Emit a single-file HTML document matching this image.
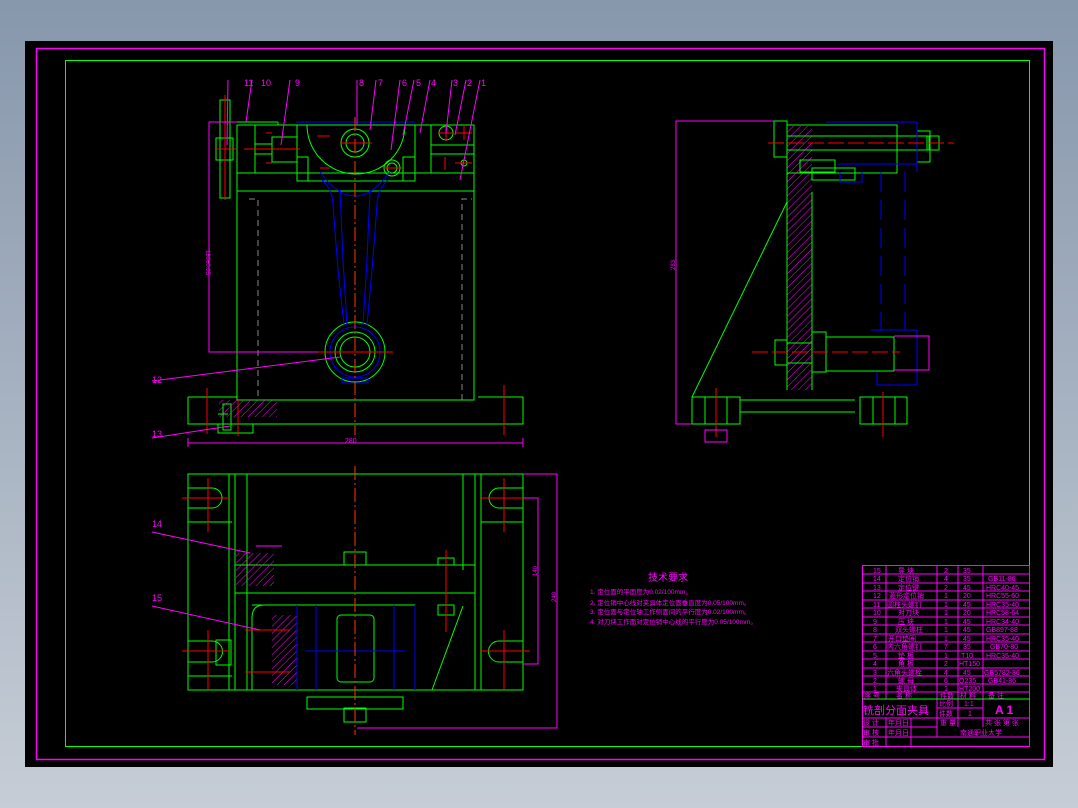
<!DOCTYPE html>
<html><head><meta charset="utf-8"><style>
html,body{margin:0;padding:0;width:1078px;height:808px;overflow:hidden;background:linear-gradient(#8797ac,#c6cdd6);}
svg{position:absolute;left:0;top:0}
text{font-family:"Liberation Sans","Noto Sans CJK SC",sans-serif;fill:#ff00ff}
</style></head><body>
<svg width="1078" height="808" viewBox="0 0 1078 808" xmlns="http://www.w3.org/2000/svg">
<defs>
<pattern id="h" width="5" height="5" patternUnits="userSpaceOnUse" patternTransform="rotate(45)"><line x1="0" y1="0" x2="0" y2="5" stroke="#ff00ff" stroke-width="1"/></pattern>
</defs>
<rect x="25" y="41" width="1028" height="726" fill="#000"/>
<rect x="36.5" y="48.5" width="1008" height="711" fill="none" stroke="#ff00ff" stroke-width="1.5"/>
<rect x="65.5" y="60.5" width="964" height="686" fill="none" stroke="#00ff00" stroke-width="1"/>

<!-- FRONT VIEW -->
<g fill="none" stroke="#00ff00" stroke-width="1">
<rect x="237" y="125" width="237" height="275"/>
<line x1="237" y1="173" x2="474" y2="173"/><line x1="237" y1="191" x2="474" y2="191"/>
<rect x="297" y="125" width="118" height="56"/>
<rect x="297" y="157" width="11" height="24"/><rect x="403" y="157" width="12" height="24"/>
<line x1="255" y1="125" x2="255" y2="173"/><line x1="431" y1="125" x2="431" y2="173"/>
<line x1="431" y1="145" x2="474" y2="145"/><line x1="431" y1="154" x2="474" y2="154"/>
<rect x="272" y="137" width="25" height="25"/><rect x="255" y="144" width="17" height="10"/>
<line x1="237" y1="122" x2="278" y2="122"/><line x1="278" y1="122" x2="278" y2="125"/>
<rect x="220" y="100" width="10" height="98"/><rect x="216" y="138" width="17" height="22"/>
<path d="M307 125 A49 49 0 0 0 405 125"/>
<circle cx="355" cy="143" r="14"/><circle cx="355" cy="143" r="9"/>
<circle cx="392" cy="168" r="8"/><circle cx="392" cy="168" r="5"/>
<circle cx="446" cy="133" r="7"/><circle cx="464" cy="163" r="3"/>
<circle cx="355" cy="352" r="30"/><circle cx="355" cy="352" r="20"/><circle cx="355" cy="352" r="15"/>
<path d="M188 397H237M478 397H523V424H188V397"/>
<path d="M218 424V433H253V424M218 414H228"/>
<rect x="223" y="404" width="8" height="26"/>
</g>
<rect x="219" y="400" width="58" height="17" fill="url(#h)"/>
<g fill="none" stroke="#0000ff" stroke-width="1">
<path d="M296 122H415"/>
<path d="M320 172Q355 220 390 172"/>
<path d="M322 180Q333 190 333 205L338 270L344 325M388 180Q377 190 377 205L372 270L367 325"/>
<path d="M340 190L343 260L347 325M370 190L367 260L363 325"/>
<circle cx="355" cy="352" r="25"/><rect x="342" y="378" width="26" height="5"/>
</g>
<g fill="none" stroke="#ff0000" stroke-width="1">
<line x1="355" y1="117" x2="355" y2="435" stroke="#ff3300" stroke-dasharray="14 3 2 3"/>
<line x1="318" y1="352" x2="393" y2="352"/><line x1="225" y1="95" x2="225" y2="200"/>
<line x1="215" y1="149" x2="236" y2="149"/><line x1="244" y1="149" x2="300" y2="149"/>
<line x1="438" y1="133" x2="454" y2="133"/><line x1="446" y1="125" x2="446" y2="141"/>
<line x1="455" y1="133" x2="472" y2="133"/><line x1="464" y1="126" x2="464" y2="140"/>
<line x1="455" y1="163" x2="472" y2="163"/><line x1="445" y1="157" x2="445" y2="170"/>
<line x1="340" y1="143" x2="372" y2="143"/><line x1="384" y1="168" x2="402" y2="168"/>
<line x1="317" y1="136" x2="330" y2="136"/><line x1="320" y1="168" x2="330" y2="168"/>
<line x1="266" y1="133" x2="272" y2="133"/><line x1="266" y1="163" x2="272" y2="163"/>
<line x1="207" y1="388" x2="207" y2="434"/><line x1="504" y1="385" x2="504" y2="435"/>
<line x1="238" y1="400" x2="238" y2="436"/>
</g>
<g stroke="#888" stroke-width="1" stroke-dasharray="6 4" fill="none">
<path d="M249 199H258V400M462 400V199H472"/>
</g>
<g stroke="#ff00ff" stroke-width="1" fill="none">
<path d="M237 122H209V352H318"/>
<path d="M188 443H523M188 438V447M523 438V447"/>
<path d="M152 381L340 357M152 438L230 426"/>
<path d="M228 80L227 145M252 80L246 122M290 80L281 145M357 80L357 125M376 80L370 130M400 80L391 150M414 80L403 135M430 80L420 133M452 80L446 133M466 80L455 135M480 80L460 180"/>
</g>
<g font-size="9">
<text x="244" y="86">11</text><text x="261" y="86">10</text><text x="295" y="86">9</text><text x="359" y="86">8</text><text x="378" y="86">7</text><text x="402" y="86">6</text><text x="416" y="86">5</text><text x="431" y="86">4</text><text x="453" y="86">3</text><text x="467" y="86">2</text><text x="481" y="86">1</text>
<text x="152" y="383">12</text><text x="152" y="437">13</text>
<text x="345" y="443" font-size="7">280</text>
<text x="0" y="0" font-size="6" transform="translate(206,250) rotate(90)">180±0.05</text>
</g>

<!-- SIDE VIEW -->
<rect x="787" y="126" width="25" height="264" fill="url(#h)"/>
<g fill="none" stroke="#00ff00" stroke-width="1">
<path d="M787 126V390M812 192V390"/>
<rect x="774" y="121" width="13" height="36"/>
<rect x="787" y="125" width="110" height="48"/>
<rect x="787" y="136" width="142" height="14"/>
<rect x="917" y="131" width="13" height="31"/><rect x="927" y="136" width="12" height="14"/>
<rect x="800" y="160" width="35" height="12"/><rect x="812" y="168" width="43" height="12"/>
<rect x="812" y="332" width="14" height="40"/><rect x="826" y="337" width="68" height="34"/>
<rect x="775" y="340" width="12" height="25"/><rect x="787" y="343" width="25" height="20"/>
<path d="M787 202L692 397"/>
<rect x="692" y="397" width="48" height="27"/><rect x="705" y="397" width="22" height="27"/>
<path d="M740 400H855M740 412H855"/>
<rect x="860" y="397" width="47" height="27"/><rect x="873" y="397" width="22" height="27"/>
</g>
<g fill="none" stroke="#0000ff" stroke-width="1">
<path d="M826 122H917V172M838 164H917M840 172V182H862V172"/>
<path d="M881 172V330M905 172V330" stroke-dasharray="20 8"/>
<path d="M871 330H917V385H877V372"/>
</g>
<g stroke="#ff0000" stroke-width="1">
<line x1="768" y1="143" x2="954" y2="143" stroke-dasharray="16 4"/>
<line x1="752" y1="352" x2="900" y2="352" stroke-dasharray="16 4"/>
<line x1="716" y1="388" x2="716" y2="437"/><line x1="883" y1="392" x2="883" y2="437"/>
</g>
<g stroke="#ff00ff" fill="none" stroke-width="1">
<path d="M774 121H676V424H692"/><rect x="705" y="430" width="22" height="12"/>
<path d="M894 336H929V370H894"/>
</g>
<text x="0" y="0" font-size="6" transform="translate(675,270) rotate(-90)">283</text>

<!-- PLAN VIEW -->
<g fill="none" stroke="#00ff00" stroke-width="1">
<rect x="188" y="474" width="335" height="216"/>
<path d="M229 474V690M235 474V690M247 474V690M475 474V690M481 474V690M463 474V570"/>
<path d="M235 565H475M235 593H475"/>
<path d="M188 488H212A10 10 0 0 1 212 508H188M188 522H232M481 522H523M188 641H212A10 10 0 0 1 212 662H188M188 676H232M523 488H499A10 10 0 0 0 499 508H523M523 641H499A10 10 0 0 0 499 662H523"/>
<rect x="297" y="605" width="118" height="85"/>
<rect x="337" y="615" width="37" height="67" rx="4"/>
<rect x="307" y="697" width="96" height="12"/>
<rect x="344" y="552" width="22" height="13"/><rect x="344" y="708" width="22" height="14"/>
<rect x="438" y="558" width="16" height="7"/><rect x="438" y="605" width="16" height="10"/>
<path d="M463 606L432 690"/>
<rect x="216" y="640" width="15" height="25"/>
<path d="M252 605H297M252 690V618Q252 605 264 605"/>
</g>
<rect x="236" y="553" width="38" height="33" fill="url(#h)"/>
<rect x="272" y="615" width="25" height="70" fill="url(#h)"/>
<g fill="none" stroke="#0000ff" stroke-width="1">
<path d="M297 605V690M415 605V690M316 605V690M394 605V690"/>
<line x1="305" y1="651" x2="405" y2="651"/>
</g>
<g stroke="#ff0000" stroke-width="1">
<line x1="355" y1="466" x2="355" y2="735" stroke="#ff3300" stroke-dasharray="14 3 2 3"/>
<line x1="182" y1="498" x2="230" y2="498"/><line x1="480" y1="498" x2="530" y2="498"/>
<line x1="182" y1="651" x2="230" y2="651"/><line x1="480" y1="651" x2="530" y2="651"/>
<line x1="208" y1="478" x2="208" y2="532"/><line x1="504" y1="478" x2="504" y2="532"/>
<line x1="208" y1="630" x2="208" y2="690"/><line x1="504" y1="630" x2="504" y2="690"/>
<line x1="446" y1="550" x2="446" y2="632"/>
<line x1="245" y1="630" x2="290" y2="630"/><line x1="245" y1="672" x2="290" y2="672"/>
</g>
<g stroke="#ff00ff" fill="none" stroke-width="1">
<path d="M523 474H557V728H357M523 498H538V664H523"/>
<path d="M152 532L250 553M152 606L260 630"/>
<path d="M256 546H282"/>
</g>
<g font-size="9"><text x="152" y="527">14</text><text x="152" y="601">15</text></g>
<text x="0" y="0" font-size="6" transform="translate(537,576) rotate(-90)">140</text>
<text x="0" y="0" font-size="6" transform="translate(556,602) rotate(-90)">240</text>

<!-- TECH REQ -->
<g font-size="9"><text x="648" y="581" font-size="10">技术要求</text></g>
<g font-size="6.5">
<text x="590" y="594">1. 定位面的平面度为0.02/100mm。</text>
<text x="590" y="605">2. 定位销中心线对夹具体定位面垂直度为0.05/100mm。</text>
<text x="590" y="614">3. 定位面与定位轴工作侧面间的平行度为0.02/100mm。</text>
<text x="590" y="624">4. 对刀块工作面对定位销中心线的平行度为0.05/100mm。</text>
</g>

<!-- TITLE BLOCK -->
<g stroke="#ff00ff" fill="none" stroke-width="1">
<rect x="862.5" y="565.5" width="167" height="181"/>
<path d="M862 574H1030M862 583H1030M862 591H1030M862 600H1030M862 608H1030M862 617H1030M862 625H1030M862 634H1030M862 642H1030M862 651H1030M862 659H1030M862 668H1030M862 676H1030M862 684H1030M862 692H1030M862 699H1030"/>
<path d="M886 566V699M937 566V737M958 566V727M983 566V727"/>
<path d="M937 708H983M862 718H1030M862 727H937M937 737H1030M862 737H937"/>
<path d="M886 718V747M911 718V747"/>
</g>
<line x1="862" y1="699" x2="1030" y2="699" stroke="#00ff00"/>
<g font-size="7">
<text x="873" y="573">15</text><text x="898" y="573">导 块</text><text x="944" y="573">2</text><text x="963" y="573">35</text>
<text x="873" y="581">14</text><text x="898" y="581">定位销</text><text x="944" y="581">4</text><text x="963" y="581">35</text><text x="988" y="581">GB11-86</text>
<text x="873" y="590">13</text><text x="898" y="590">定位键</text><text x="944" y="590">2</text><text x="963" y="590">45</text><text x="986" y="590">HRC40-45</text>
<text x="873" y="598">12</text><text x="889" y="598">菱形定位销</text><text x="944" y="598">1</text><text x="963" y="598">20</text><text x="986" y="598">HRC55-60</text>
<text x="873" y="607">11</text><text x="887" y="607">圆柱头螺钉</text><text x="944" y="607">1</text><text x="963" y="607">45</text><text x="986" y="607">HRC35-40</text>
<text x="873" y="615">10</text><text x="898" y="615">对刀块</text><text x="944" y="615">1</text><text x="963" y="615">20</text><text x="986" y="615">HRC58-64</text>
<text x="873" y="624">9</text><text x="898" y="624">压 块</text><text x="944" y="624">1</text><text x="963" y="624">45</text><text x="986" y="624">HRC34-40</text>
<text x="873" y="632">8</text><text x="895" y="632">双头螺柱</text><text x="944" y="632">1</text><text x="963" y="632">45</text><text x="986" y="632">GB897-88</text>
<text x="873" y="641">7</text><text x="888" y="641">开口垫圈</text><text x="944" y="641">1</text><text x="963" y="641">45</text><text x="986" y="641">HRC35-40</text>
<text x="873" y="649">6</text><text x="887" y="649">内六角螺钉</text><text x="944" y="649">7</text><text x="963" y="649">35</text><text x="990" y="649">GB70-80</text>
<text x="873" y="658">5</text><text x="898" y="658">垫 板</text><text x="944" y="658">1</text><text x="961" y="658">T10</text><text x="986" y="658">HRC35-40</text>
<text x="873" y="666">4</text><text x="898" y="666">角 板</text><text x="944" y="666">2</text><text x="959" y="666">HT150</text>
<text x="873" y="675">3</text><text x="887" y="675">六角头螺栓</text><text x="944" y="675">4</text><text x="963" y="675">45</text><text x="984" y="675">GB5782-86</text>
<text x="873" y="683">2</text><text x="898" y="683">螺 母</text><text x="944" y="683">6</text><text x="959" y="683">Q235</text><text x="988" y="683">GB41-86</text>
<text x="873" y="691">1</text><text x="896" y="691">夹具体</text><text x="944" y="691">1</text><text x="959" y="691">HT200</text>
<text x="864" y="698">序 号</text><text x="896" y="698">名 称</text><text x="940" y="698">件数</text><text x="960" y="698">材 料</text><text x="988" y="698">备 注</text>
<text x="863" y="714" font-size="11">铣剖分面夹具</text>
<text x="939" y="706">比例</text><text x="964" y="706">1:1</text><text x="939" y="716">件数</text><text x="968" y="716">1</text>
<text x="995" y="714" font-size="12" font-weight="bold">A 1</text>
<text x="863" y="725">设 计</text><text x="888" y="725">年月日</text><text x="940" y="725">重 量</text><text x="985" y="725">共 张 第 张</text>
<text x="863" y="735">审 核</text><text x="888" y="735">年月日</text><text x="960" y="735">南通职业大学</text>
<text x="863" y="745">审 批</text>
</g>
</svg>
</body></html>
